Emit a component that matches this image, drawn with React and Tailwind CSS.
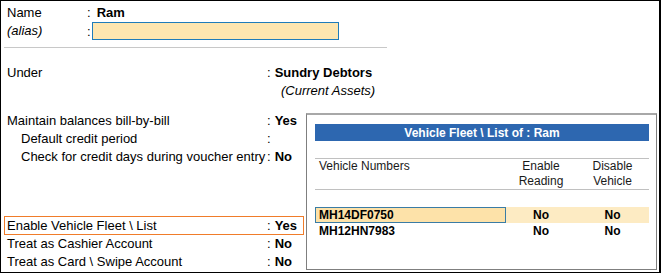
import React from "react";

const fleet = [
  { no: "MH14DF0750", reading: "No", disable: "No", active: true },
  { no: "MH12HN7983", reading: "No", disable: "No", active: false },
];

const Row = ({ label, value, indent, extra }) => (
  <div className="flex h-[18px] items-center leading-[18px]">
    <div className={`w-[263px] shrink-0 ${indent ? "pl-[17px]" : "pl-[3px]"}`}>{label}</div>
    <span>:</span>
    {value && <span className="ml-[4px] font-bold">{value}</span>}
    {extra}
  </div>
);

const App = () => {
  return (
    <div
      className="relative h-[273px] w-[661px] bg-white text-[13px] text-black"
      style={{ fontFamily: '"Liberation Sans", Arial, sans-serif' }}
    >
      <div className="h-[273px] w-[661px] border border-r-2 border-black px-[3px] pt-[3px]">
        {/* Name / alias */}
        <div className="flex h-[18px] items-center leading-[18px]">
          <div className="w-[83px] shrink-0 pl-[3px]">Name</div>
          <span>:</span>
          <span className="ml-[6px] font-bold">Ram</span>
        </div>
        <div className="flex h-[18px] items-center leading-[18px]">
          <div className="w-[83px] shrink-0 pl-[3px] italic">(alias)</div>
          <span className="mt-[2px]">:</span>
          <div className="ml-[1px] h-[18px] w-[247px] border border-[#1f7cba] bg-[#fde6b0]"></div>
        </div>
        <div className="mt-[7px] h-px w-[383px] bg-[#c8c8c8]"></div>

        {/* Under */}
        <div className="mt-[16px]">
          <Row label="Under" value="Sundry Debtors" />
          <div className="h-[18px] pl-[277px] leading-[18px] italic">(Current Assets)</div>
        </div>

        {/* Bill-by-bill */}
        <div className="mt-[12px]">
          <Row label="Maintain balances bill-by-bill" value="Yes" />
          <Row label="Default credit period" indent />
          <Row label="Check for credit days during voucher entry" value="No" indent />
        </div>

        {/* Fleet & cashier */}
        <div className="mt-[50px]">
          <div className="flex h-[19px] w-[300px] items-center border border-[#f07c2a] leading-[17px]">
            <div className="w-[262px] shrink-0 pl-[2px]">Enable Vehicle Fleet \ List</div>
            <span>:</span>
            <span className="ml-[4px] font-bold">Yes</span>
          </div>
          <Row label="Treat as Cashier Account" value="No" />
          <Row label="Treat as Card \ Swipe Account" value="No" />
        </div>
      </div>

      {/* Vehicle fleet popup */}
      <div className="absolute left-[306px] top-[113px] h-[157px] w-[351px] border border-t-2 border-[#7f7f7f] border-t-[#a8a8a8] bg-white px-[8px] pt-[9px] text-[12px]">
        <div className="flex h-[17px] w-[334px] items-center justify-center bg-[#2d67b0] font-bold text-white">
          Vehicle Fleet \ List of : Ram
        </div>
        <div className="mt-[17px] w-[334px] border-t border-b border-[#c0c0c0] text-[#1a1a1a]">
          <div className="flex leading-[15px]">
            <div className="w-[191px] pl-[4px] pt-[0px]">Vehicle Numbers</div>
            <div className="w-[70px] text-center">
              Enable
              <br />
              Reading
            </div>
            <div className="w-[73px] text-center">
              Disable
              <br />
              Vehicle
            </div>
          </div>
        </div>
        <div className="mt-[17px] w-[334px] font-bold">
          {fleet.map((v) => (
            <div
              key={v.no}
              className={`flex h-[16px] items-center ${v.active ? "bg-[#fdebc3]" : ""}`}
            >
              <div
                className={`flex h-[16px] w-[191px] items-center pl-[3px] ${
                  v.active ? "border border-[#3a7ca5] bg-[#fde2a9]" : "pl-[4px]"
                }`}
              >
                {v.no}
              </div>
              <div className="w-[70px] text-center">{v.reading}</div>
              <div className="w-[73px] text-center">{v.disable}</div>
            </div>
          ))}
        </div>
      </div>
    </div>
  );
};

export default App;
